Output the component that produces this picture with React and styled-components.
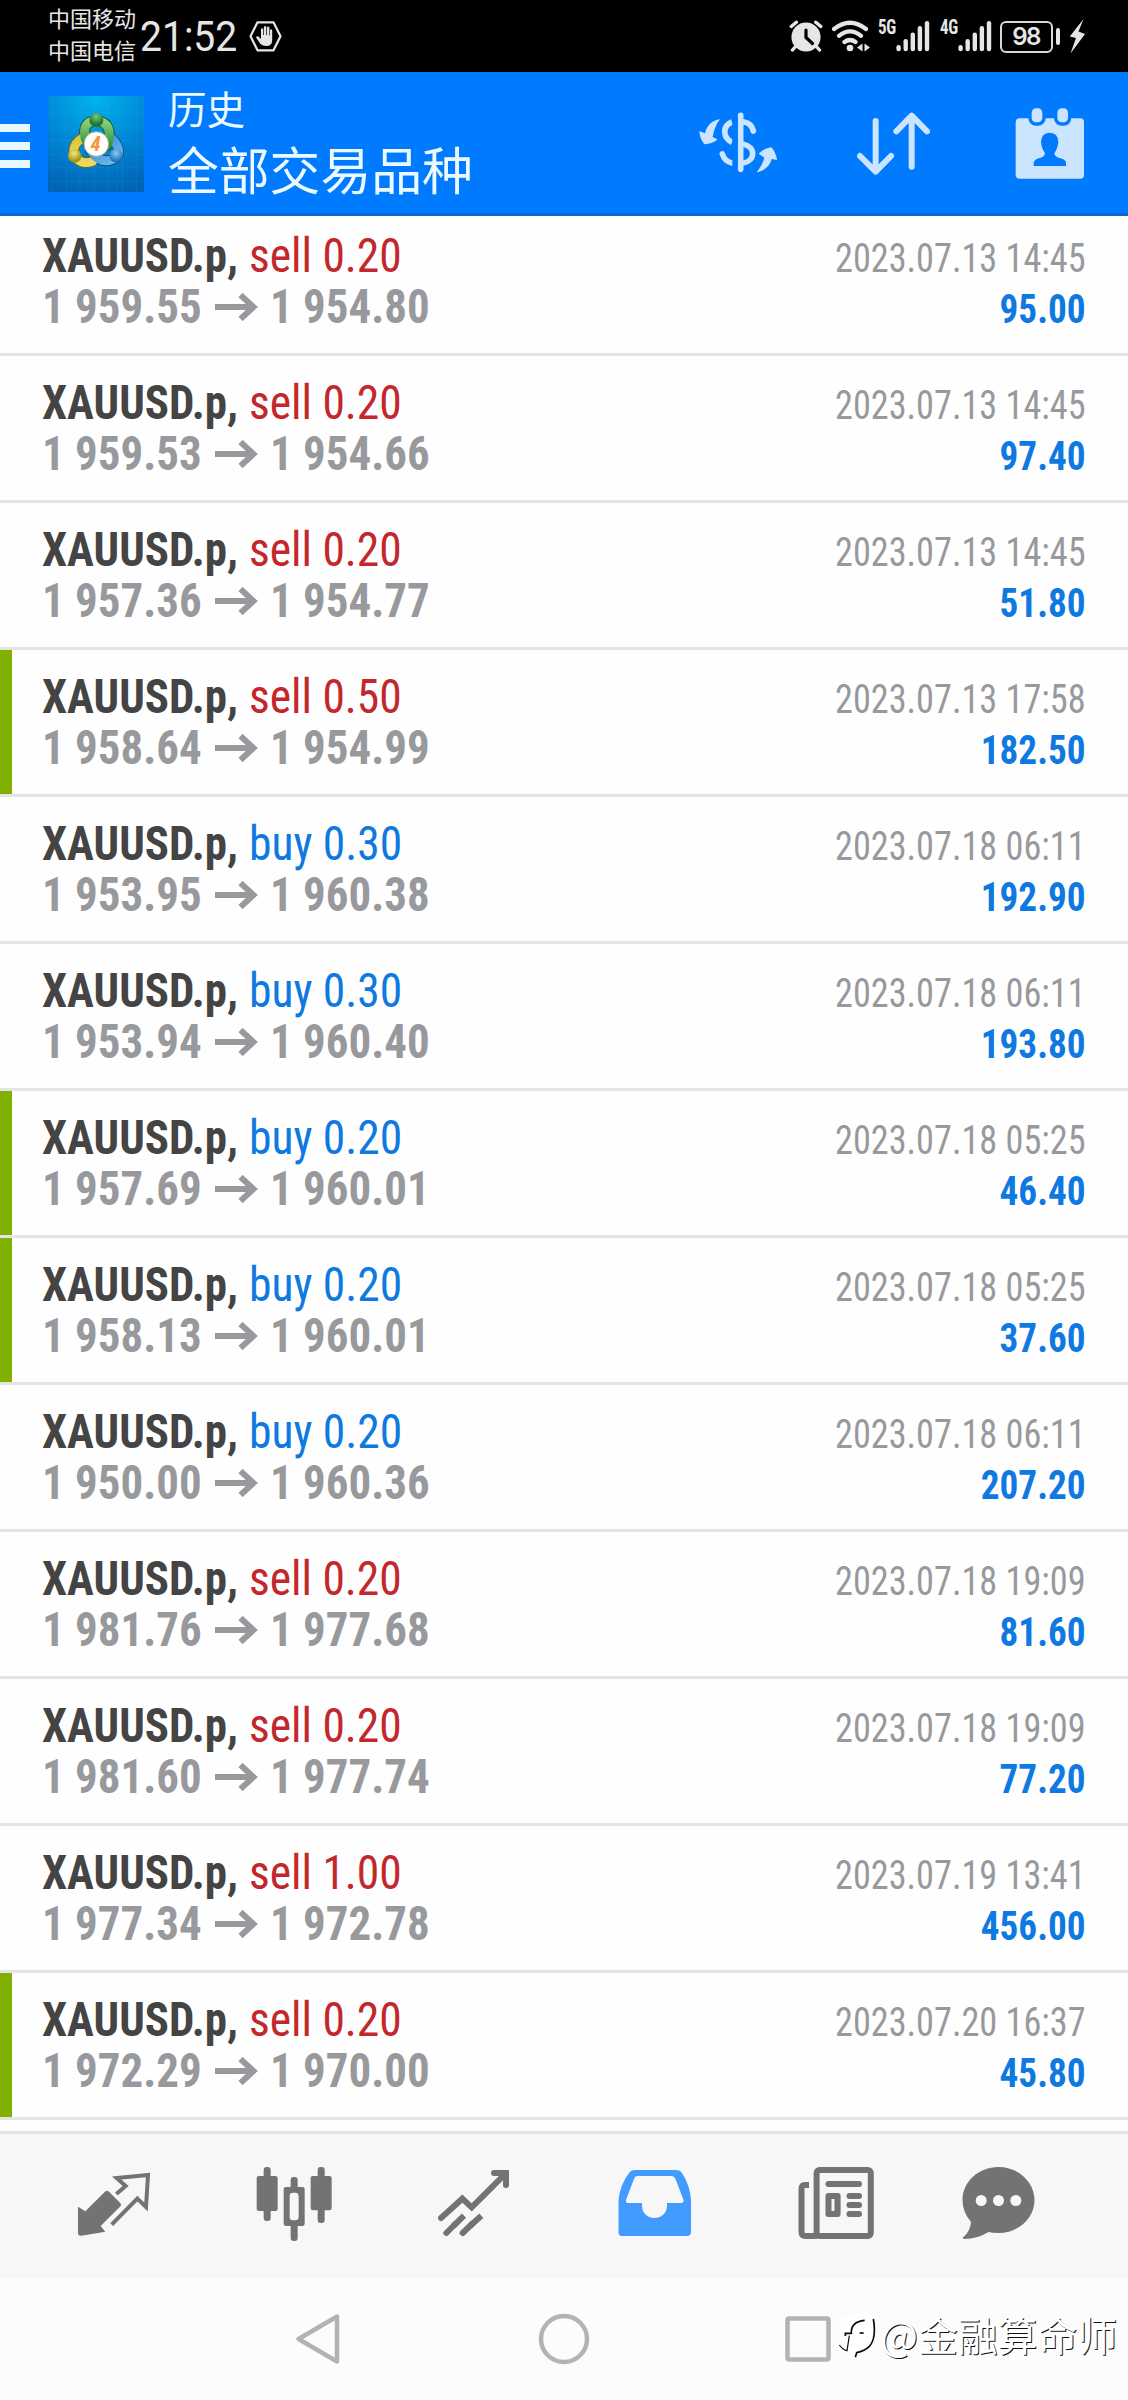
import React from "react";
import styled, { createGlobalStyle } from "styled-components";

const CJK = `"Noto Sans CJK SC", sans-serif`;
const CONDENSED = `"Roboto Condensed", Roboto, sans-serif`;

const GlobalStyle = createGlobalStyle`
  * { box-sizing: border-box; }
  body { margin: 0; background: #fff; }
  svg { display: block; flex: none; }
`;

const Screen = styled.main`
  display: flex;
  flex-direction: column;
  width: 1128px;
  height: 2400px;
  overflow: hidden;
  background: #fefefe;
  font-family: ${CONDENSED};
  font-stretch: condensed;
`;

/* ---------- status bar ---------- */
const StatusBar = styled.header`
  display: flex;
  justify-content: space-between;
  height: 72px;
  padding: 0 43px 0 48px;
  background: #000;
  color: #e6e6e6;
`;
const StatusGroup = styled.div`
  display: flex;
  align-items: flex-start;
`;
const Carriers = styled.div`
  width: 92px;
  padding-top: 2px;
  font: 400 22px/31.5px ${CJK};
`;
const Clock = styled.div`
  width: 109px;
  padding-top: 12px;
  font: 450 42px/50px Roboto, sans-serif;
  transform: scaleX(0.93);
  transform-origin: left;
  white-space: nowrap;
`;
const StatusIcon = styled.svg`
  width: ${(p) => p.$w}px;
  height: 36px;
  margin-top: 18px;
  margin-left: ${(p) => p.$gap || 0}px;
  fill: #e6e6e6;
`;
const NetLabel = styled.div`
  width: 17px;
  margin-top: 15px;
  margin-left: ${(p) => p.$gap}px;
  font: 700 20px/24px ${CONDENSED};
  font-stretch: condensed;
  letter-spacing: -0.5px;
  transform: scaleX(0.85);
  transform-origin: left;
`;
const Battery = styled.div`
  width: 53px;
  height: 32px;
  margin: 21px 3px 0 8px;
  border: 2.5px solid #d8d8d8;
  border-radius: 6px;
  font: 600 24px/27px Inter, sans-serif;
  letter-spacing: -1.6px;
  text-indent: -1px;
  text-align: center;
`;

/* ---------- app header ---------- */
const AppHeader = styled.header`
  display: flex;
  align-items: center;
  height: 144px;
  padding-right: 43px;
  background: #007aff;
  border-bottom: 3px solid #0a69cf;
`;
const MenuButton = styled.div`
  display: flex;
  flex-direction: column;
  gap: 10px;
  width: 30px;
  margin: 6px 18px 0 0;
`;
const MenuLine = styled.span`
  height: 8px;
  background: #e9f7ff;
`;
const LogoImage = styled.svg`
  width: 96px;
  height: 96px;
  margin-top: 3px;
`;
const Titles = styled.div`
  display: flex;
  flex-direction: column;
  margin: 0 auto 8px 24px;
  color: #ecfaff;
  font-family: ${CJK};
  white-space: nowrap;
`;
const Subtitle = styled.div`
  font-size: 38.6px;
  line-height: 60px;
`;
const Title = styled.div`
  font-size: 50.8px;
  line-height: 63px;
`;
const HeaderIcon = styled.svg`
  width: ${(p) => p.$w}px;
  height: 72px;
  margin-left: ${(p) => p.$gap || 0}px;
  fill: #cbe4ff;
`;

/* ---------- history list ---------- */
const List = styled.section`
  display: flex;
  flex: 1;
  flex-direction: column;
  justify-content: flex-end;
  overflow: hidden;
  padding-bottom: 11px;
`;
const Row = styled.article`
  flex: none;
  border-bottom: 3px solid #e4e4e4;
`;
const RowBody = styled.div`
  display: flex;
  justify-content: space-between;
  height: 144px;
  padding: 21px 42px 0 30px;
  border-left: 12px solid ${(p) => (p.$marked ? "#80b100" : "transparent")};
`;
const Deal = styled.div`
  font-size: 48px;
  line-height: 51px;
  white-space: nowrap;
`;
const DealLine = styled.div`
  display: grid;
  grid-template-columns: ${(p) => p.$cols};
  height: 51px;
`;
const Squeezed = styled.span`
  display: block;
  transform: scaleX(${(p) => p.$x});
  transform-origin: ${(p) => p.$from || "left"};
`;
const Symbol = styled(Squeezed)`
  color: #444;
  font-weight: 700;
`;
const Side = styled(Squeezed)`
  color: ${(p) => (p.$side === "buy" ? "#0f79e2" : "#c3272b")};
`;
const Price = styled(Squeezed)`
  color: #98999c;
  font-weight: 700;
`;
const PriceArrow = styled.svg`
  width: 43px;
  height: 28px;
  margin-top: 12px;
  fill: none;
  stroke: #98999c;
  stroke-width: 6;
`;
const Result = styled.div`
  padding-top: 3px;
  font-size: 40px;
  line-height: 51px;
  text-align: right;
  white-space: nowrap;
`;
const Time = styled(Squeezed)`
  color: #98999c;
`;
const Profit = styled(Squeezed)`
  color: #0f79e2;
  font-weight: 700;
`;

/* ---------- bottom bars ---------- */
const TabBar = styled.nav`
  display: flex;
  flex: none;
  height: 147px;
  padding-left: 24px;
  border-top: 3px solid #e4e4e4;
  background: #f7f7f7;
`;
const Tab = styled.div`
  display: flex;
  flex: none;
  justify-content: center;
  width: ${(p) => p.$w || 180}px;
  padding-top: 31px;
`;
const TabIcon = styled.svg`
  width: ${(p) => p.$w}px;
  height: 78px;
  fill: ${(p) => (p.$active ? "#429bff" : "#737373")};
`;
const SystemBar = styled.nav`
  position: relative;
  display: flex;
  flex: none;
  align-items: center;
  height: 122px;
  padding-left: 295px;
  background: #fcfcfc;
`;
const SystemIcon = styled.svg`
  width: ${(p) => p.$w}px;
  height: 52px;
  margin-right: ${(p) => p.$after || 0}px;
  fill: none;
  stroke: #b3b3b3;
  stroke-width: 4.5;
  stroke-linejoin: round;
`;
const Watermark = styled.div`
  position: absolute;
  right: 11px;
  top: 31px;
  display: flex;
  align-items: center;
  color: #fff;
  font: 400 39.8px/50px ${CJK};
  text-shadow: 1px 1px 0 #111;
  white-space: nowrap;
`;

const deals = [
  ["sell", "0.20", "1 959.55", "1 954.80", "2023.07.13 14:45", "95.00"],
  ["sell", "0.20", "1 959.53", "1 954.66", "2023.07.13 14:45", "97.40"],
  ["sell", "0.20", "1 957.36", "1 954.77", "2023.07.13 14:45", "51.80"],
  ["sell", "0.50", "1 958.64", "1 954.99", "2023.07.13 17:58", "182.50", true],
  ["buy", "0.30", "1 953.95", "1 960.38", "2023.07.18 06:11", "192.90"],
  ["buy", "0.30", "1 953.94", "1 960.40", "2023.07.18 06:11", "193.80"],
  ["buy", "0.20", "1 957.69", "1 960.01", "2023.07.18 05:25", "46.40", true],
  ["buy", "0.20", "1 958.13", "1 960.01", "2023.07.18 05:25", "37.60", true],
  ["buy", "0.20", "1 950.00", "1 960.36", "2023.07.18 06:11", "207.20"],
  ["sell", "0.20", "1 981.76", "1 977.68", "2023.07.18 19:09", "81.60"],
  ["sell", "0.20", "1 981.60", "1 977.74", "2023.07.18 19:09", "77.20"],
  ["sell", "1.00", "1 977.34", "1 972.78", "2023.07.19 13:41", "456.00"],
  ["sell", "0.20", "1 972.29", "1 970.00", "2023.07.20 16:37", "45.80", true],
];

function SignalBars({ gap }) {
  return (
    <StatusIcon $w={34} $gap={gap} viewBox="0 18 34 36">
      {[45, 39, 32.5, 26, 21].map((top, i) => (
        <rect key={top} x={0.4 + i * 7.1} y={top} width="4.4" height={51.3 - top} rx="2.2" />
      ))}
    </StatusIcon>
  );
}

function AppLogo() {
  return (
    <LogoImage viewBox="54 48 288 288">
      <defs>
        <radialGradient id="bg" cx="0.5" cy="0" r="1.05">
          <stop offset="0" stopColor="#00b4f0" />
          <stop offset="0.55" stopColor="#0085d2" />
          <stop offset="1" stopColor="#0062b4" />
        </radialGradient>
        <linearGradient id="green" x1="0" y1="0" x2="0" y2="1">
          <stop offset="0" stopColor="#8fd07c" />
          <stop offset="1" stopColor="#2b9440" />
        </linearGradient>
        <linearGradient id="yellow" x1="0" y1="0" x2="0" y2="1">
          <stop offset="0" stopColor="#d8c83a" />
          <stop offset="1" stopColor="#ecd95e" />
        </linearGradient>
        <linearGradient id="blue" x1="0" y1="0" x2="1" y2="1">
          <stop offset="0" stopColor="#2f86c6" />
          <stop offset="1" stopColor="#6bbcf0" />
        </linearGradient>
        <radialGradient id="ballG" cx="0.5" cy="0.25" r="0.8">
          <stop offset="0" stopColor="#7cc878" />
          <stop offset="0.7" stopColor="#1c7a33" />
        </radialGradient>
        <radialGradient id="ballY" cx="0.45" cy="0.3" r="0.8">
          <stop offset="0" stopColor="#f4ec7a" />
          <stop offset="0.8" stopColor="#9a8c12" />
        </radialGradient>
        <radialGradient id="ballB" cx="0.5" cy="0.3" r="0.8">
          <stop offset="0" stopColor="#8ccaf5" />
          <stop offset="0.8" stopColor="#1c6db4" />
        </radialGradient>
      </defs>
      <rect x="54" y="48" width="288" height="288" fill="url(#bg)" />
      <g stroke="#5cc4ff" strokeOpacity="0.14" strokeWidth="2">
        {[68, 110, 150, 192, 235, 262, 278, 320].map((x) => <path key={x} d={`M${x} 48V336`} />)}
        {[70, 98, 140, 182, 224, 262, 305].map((y) => <path key={y} d={`M54 ${y}H342`} />)}
      </g>
      <g fill="none" strokeLinecap="round">
        <path stroke="#1b5a3a" strokeWidth="33" d="M166 178C158 140 170 124 198 122C240 124 244 160 232 196" />
        <path stroke="#6d6a1c" strokeWidth="32" d="M172 170C128 180 124 218 140 236C156 252 172 250 188 244" />
        <path stroke="#134f86" strokeWidth="33" d="M246 176C272 204 270 226 252 236C226 250 200 240 182 212" />
        <path stroke="url(#yellow)" strokeWidth="26" d="M172 170C128 180 124 218 140 236C156 252 172 250 188 244" />
        <path stroke="url(#blue)" strokeWidth="27" d="M246 176C272 204 270 226 252 236C226 250 200 240 182 212" />
        <path stroke="url(#green)" strokeWidth="27" d="M166 178C158 140 170 124 198 122C240 124 244 160 232 196" />
      </g>
      <circle cx="199" cy="120" r="21" fill="url(#ballG)" />
      <circle cx="134" cy="228" r="20" fill="url(#ballY)" />
      <circle cx="258" cy="227" r="20" fill="url(#ballB)" />
      <circle cx="199" cy="192" r="37" fill="#fff" stroke="#a9a795" strokeWidth="3" />
      <text x="197" y="214" textAnchor="middle" fontFamily="Roboto, sans-serif" fontSize="62" fontStyle="italic" fontWeight="700" fill="#f5963a">4</text>
    </LogoImage>
  );
}

export default function App() {
  return (
    <Screen>
      <GlobalStyle />
      <StatusBar>
        <StatusGroup>
          <Carriers>中国移动<br />中国电信</Carriers>
          <Clock>21:52</Clock>
          <StatusIcon $w={33} viewBox="0 18 33 36">
            <path d="M8.5 22.3H24.5L31.5 36.3L24.5 50.3H8.5L1.5 36.3Z" fill="none" stroke="#e6e6e6" strokeWidth="2.2" strokeLinejoin="round" />
            <path d="M11.5 44L7 37.5Q8 35 10.5 37.5L12 39V29Q13 27.4 14.2 29V35H14.9V27Q16 25 17.3 27V35H18V27.4Q19.2 25.8 20.4 27.4V35.5H21V30Q22.2 28.5 23.2 30V40Q23 46 17.5 46Q13.5 46 11.5 44Z" />
          </StatusIcon>
        </StatusGroup>
        <StatusGroup>
          <StatusIcon $w={34} viewBox="789 18 34 36">
            <circle cx="806" cy="37" r="14.6" />
            <path d="M791.3 26.5L796.3 22.2M820.8 26.5L815.8 22.2M796 46l-3.5 4M816 46l3.5 4" fill="none" stroke="#e6e6e6" strokeWidth="3.4" strokeLinecap="round" />
            <path d="M806 30v7.5l6.5 6" fill="none" stroke="#000" strokeWidth="3.2" strokeLinecap="round" />
          </StatusIcon>
          <StatusIcon $w={38} $gap={9} viewBox="832 18 38 36">
            <path d="M834 29Q850 16.5 866 29M839 35.8Q850 27 861 35.8M844.5 42Q850 38 855.5 42" fill="none" stroke="#e6e6e6" strokeWidth="4.2" strokeLinecap="round" />
            <circle cx="850" cy="48" r="3.3" />
            <path d="M862.5 43.5V51.5L857 47.5ZM864.5 43.5V51.5L870 47.5Z" />
          </StatusIcon>
          <NetLabel $gap={8}>5G</NetLabel>
          <SignalBars gap={1} />
          <NetLabel $gap={10}>4G</NetLabel>
          <SignalBars gap={1} />
          <Battery>98</Battery>
          <StatusIcon $w={29} viewBox="1056 18 29 36">
            <rect x="1056" y="28" width="4" height="17" rx="2" />
            <path d="M1083.5 19L1069.8 36.5L1076 38L1070.5 53.5L1085 34L1078.5 31.5Z" />
          </StatusIcon>
        </StatusGroup>
      </StatusBar>

      <AppHeader>
        <MenuButton><MenuLine /><MenuLine /><MenuLine /></MenuButton>
        <AppLogo />
        <Titles>
          <Subtitle>历史</Subtitle>
          <Title>全部交易品种</Title>
        </Titles>
        <HeaderIcon $w={79} viewBox="27 20 237 216">
          <g fill="none" stroke="#cbe4ff" strokeWidth="17">
            <path d="M152 45V207M190 92Q184 68 162 65M97 161Q104 183 126 188" strokeLinecap="round" />
            <path d="M126 65C97 76 97 112 126 126M158 131C198 138 198 182 158 189" />
          </g>
          <rect x="127" y="50" width="16" height="150" fill="#007aff" />
          <path d="M90 57C66 60 50 76 45 99L29 93C25 98 38 132 46 132C60 130 76 126 82 117L68 110C72 88 78 72 90 57Z" />
          <path d="M200 216C212 200 220 185 223 172L206 160C215 150 230 143 244 141C252 150 260 165 261 179L245 176C240 197 222 212 200 216Z" />
        </HeaderIcon>
        <HeaderIcon $w={73} $gap={79} viewBox="502 20 219 216">
          <path d="M558 62V213M511 167L558 214L604 167M666 199V46M620 93L666 46L712 93" fill="none" stroke="#cbe4ff" strokeWidth="18" strokeLinecap="round" strokeLinejoin="round" />
        </HeaderIcon>
        <HeaderIcon $w={70} $gap={85} viewBox="976 20 210 216">
          <rect x="978" y="54" width="205" height="181" rx="11" />
          <g stroke="#007aff" strokeWidth="10">
            <rect x="1021" y="19" width="42" height="52" rx="18" />
            <rect x="1098" y="19" width="42" height="52" rx="18" />
          </g>
          <path d="M1032 197V186Q1034 176 1054 172Q1066 168 1066 158Q1056 146 1054 126Q1054 98 1080 97Q1106 98 1106 126Q1104 146 1094 158Q1094 168 1106 172Q1127 176 1129 186V197Z" fill="#007aff" />
        </HeaderIcon>
      </AppHeader>

      <List>
        {deals.map(([side, volume, open, close, time, profit, marked], i) => (
          <Row key={i}>
            <RowBody $marked={marked}>
              <Deal>
                <DealLine $cols="207px auto">
                  <Symbol $x={0.935}>XAUUSD.p,</Symbol>
                  <Side $x={0.948} $side={side}>{side} {volume}</Side>
                </DealLine>
                <DealLine $cols="173px 55px auto">
                  <Price $x={0.936}>{open}</Price>
                  <PriceArrow viewBox="0 0 43 28"><path d="M0 14H39M25.5 2L38.5 14L25.5 26" /></PriceArrow>
                  <Price $x={0.936}>{close}</Price>
                </DealLine>
              </Deal>
              <Result>
                <Time $x={0.906} $from="right">{time}</Time>
                <Profit $x={0.93} $from="right">{profit}</Profit>
              </Result>
            </RowBody>
          </Row>
        ))}
      </List>

      <TabBar>
        <Tab>
          <TabIcon $w={72} viewBox="54 30 216 234">
            <path d="M54 155L76 169L135 110Q141 105 147 110L180 143Q186 149 180 155L122 213L136 230L64 242Q54 243 54 234Z" />
            <path d="M169 117L197 93L170 69L264 60L258 156L232 131L155 209" fill="none" stroke="#737373" strokeWidth="12" />
          </TabIcon>
        </Tab>
        <Tab>
          <TabIcon $w={77} viewBox="586 30 231 234">
            <rect x="588" y="63" width="63" height="105" rx="7" />
            <rect x="609" y="36" width="21" height="162" rx="9" />
            <path fillRule="evenodd" d="M676 96H725Q732 96 732 103V206Q732 213 725 213H676Q669 213 669 206V103Q669 96 676 96ZM697 113Q687 113 687 123V186Q687 196 697 196H704Q714 196 714 186V123Q714 113 704 113Z" />
            <rect x="690" y="66" width="21" height="38" rx="9" />
            <rect x="690" y="204" width="21" height="54" rx="9" />
            <rect x="750" y="63" width="63" height="103" rx="7" />
            <rect x="771" y="36" width="21" height="168" rx="9" />
          </TabIcon>
        </Tab>
        <Tab>
          <TabIcon $w={73} viewBox="1134 30 219 234">
            <g fill="none" stroke="#737373" strokeWidth="18" strokeLinecap="round">
              <path d="M1143 189L1207 131L1235 157L1334 58M1302 54H1338V90" strokeLinejoin="miter" />
              <path d="M1159 234L1186 207M1208 234L1236 207" />
              <path d="M1180 213L1212 182M1230 213L1264 182" strokeLinecap="butt" />
            </g>
          </TabIcon>
        </Tab>
        <Tab $w={182}>
          <TabIcon $w={74} $active viewBox="618 2165 74 78">
            <path fillRule="evenodd" d="M635 2170H676Q680 2170 682 2173Q690 2185 691 2200V2232Q691 2236 687 2236H622Q618.5 2236 618.5 2232V2200Q620 2185 629 2173Q631 2170 635 2170ZM637 2176Q635 2176 634 2179L626 2200Q625.5 2203 628 2203H642V2206C642.5 2222 666.5 2222 667 2206V2203H681Q684 2203 683.5 2200L675.5 2179Q674 2176 672 2176Z" />
          </TabIcon>
        </Tab>
        <Tab>
          <TabIcon $w={76} viewBox="798 2165 76 78">
            <g fill="none" stroke="#737373" strokeWidth="6">
              <rect x="816.6" y="2170" width="54.2" height="66" rx="3" />
              <path d="M809 2185H805Q801.5 2185 801.5 2189V2232Q801.5 2236 805.5 2236H817" />
            </g>
            <rect x="825.5" y="2181" width="36.5" height="6" rx="3" />
            <path fillRule="evenodd" d="M828 2193H838Q840.6 2193 840.6 2196V2214Q840.6 2217 838 2217H828Q825.5 2217 825.5 2214V2196Q825.5 2193 828 2193ZM831.5 2199V2211H834.5V2199Z" />
            <rect x="846.5" y="2193" width="15.5" height="6" rx="3" />
            <rect x="846.5" y="2202" width="15.5" height="6" rx="3" />
            <rect x="846.5" y="2211" width="15.5" height="6" rx="3" />
          </TabIcon>
        </Tab>
        <Tab $w={144}>
          <TabIcon $w={73} viewBox="961.5 2165 73 78">
            <path d="M998 2167C1018 2167 1034 2182 1034 2200C1034 2218 1018 2233 998 2233Q992 2233 988 2232Q977 2239 964 2239Q961 2238.5 963 2237Q970 2231 970.5 2222Q962 2212 962 2200C962 2182 978 2167 998 2167Z" />
            <g fill="#f7f7f7">
              <circle cx="980.7" cy="2200.5" r="5.5" />
              <circle cx="998" cy="2200.5" r="5.5" />
              <circle cx="1015.3" cy="2200.5" r="5.5" />
            </g>
          </TabIcon>
        </Tab>
      </TabBar>

      <SystemBar>
        <SystemIcon $w={46} $after={197} viewBox="295 2313 46 52">
          <path d="M337 2316.5V2361.5L298.5 2339Z" />
        </SystemIcon>
        <SystemIcon $w={52} $after={194} viewBox="538 2313 52 52">
          <circle cx="564" cy="2339" r="23" />
        </SystemIcon>
        <SystemIcon $w={48} viewBox="784 2313 48 52">
          <rect x="787.5" y="2318.5" width="41" height="41" rx="1.5" />
        </SystemIcon>
        <Watermark>
          <svg width="42" height="50" viewBox="182 42 126 150">
            <path d="M196 70Q236 40 284 62Q304 120 276 158L234 186L232 172H206Q180 160 184 120Z" fill="#fff" />
            <g fill="none" stroke="#0a0a0a">
              <path d="M204 123V115H222Q220 80 262 76" strokeWidth="5" />
              <path d="M247 114H259" strokeWidth="5" />
              <path d="M288 72Q298 130 276 154Q262 168 238 173L234 187" strokeWidth="5" />
              <path d="M186 150Q196 164 209 167L216 122" strokeWidth="3.5" />
            </g>
          </svg>
          @金融算命师
        </Watermark>
      </SystemBar>
    </Screen>
  );
}
